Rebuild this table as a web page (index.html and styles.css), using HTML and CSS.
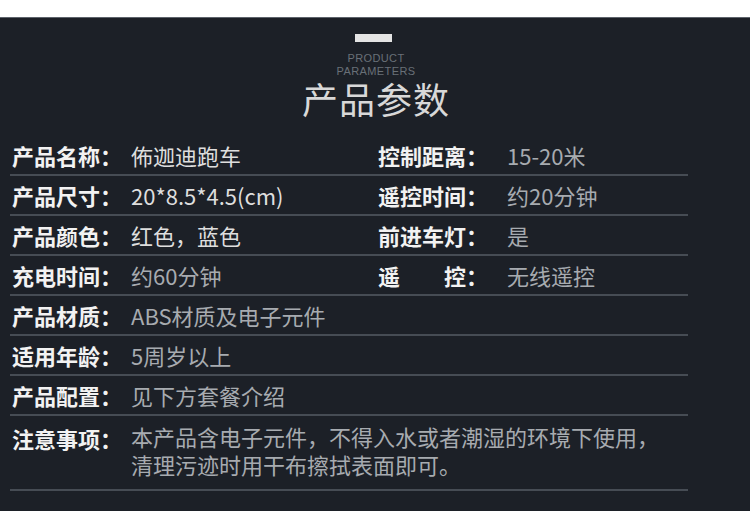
FILE: index.html
```html
<!DOCTYPE html>
<html lang="zh-CN">
<head>
<meta charset="utf-8">
<link rel="stylesheet" href="styles.css">
</head>
<body>
<section class="panel">
  <header class="head">
    <div class="bar"></div>
    <div class="en">PRODUCT</div>
    <div class="en">PARAMETERS</div>
    <h1 class="title">产品参数</h1>
  </header>
  <div class="table">
    <div class="row">
      <div class="lab">产品名称：</div><div class="val hi">佈迦迪跑车</div>
      <div class="lab">控制距离：</div><div class="val">15-20米</div>
    </div>
    <div class="row">
      <div class="lab">产品尺寸：</div><div class="val hi">20*8.5*4.5(cm)</div>
      <div class="lab">遥控时间：</div><div class="val">约20分钟</div>
    </div>
    <div class="row">
      <div class="lab">产品颜色：</div><div class="val hi">红色，蓝色</div>
      <div class="lab">前进车灯：</div><div class="val">是</div>
    </div>
    <div class="row">
      <div class="lab">充电时间：</div><div class="val">约60分钟</div>
      <div class="lab">遥　　控：</div><div class="val">无线遥控</div>
    </div>
    <div class="row">
      <div class="lab">产品材质：</div><div class="val wide">ABS材质及电子元件</div>
    </div>
    <div class="row">
      <div class="lab">适用年龄：</div><div class="val wide">5周岁以上</div>
    </div>
    <div class="row">
      <div class="lab">产品配置：</div><div class="val wide">见下方套餐介绍</div>
    </div>
    <div class="row tall">
      <div class="lab">注意事项：</div>
      <div class="val wide note">
        <div class="line">本产品含电子元件，不得入水或者潮湿的环境下使用，</div>
        <div class="line">清理污迹时用干布擦拭表面即可。</div>
      </div>
    </div>
  </div>
</section>
</body>
</html>
```

FILE: styles.css
```css
html, body {
  margin: 0;
  padding: 0;
  background: #ffffff;
}
body {
  width: 750px;
  height: 527px;
  overflow: hidden;
  font-family: "Noto Sans CJK SC", "Noto Sans", sans-serif;
}
.panel {
  margin-top: 17px;
  height: 494px;
  box-sizing: border-box;
  border-top: 1px solid #5d636b;
  background: #1c2027;
}
.head {
  display: flex;
  flex-direction: column;
  align-items: center;
  padding-top: 16px;
  padding-left: 2px;
}
.bar {
  width: 37px;
  height: 8px;
  background: #e4e4e4;
  margin-left: -5px;
  margin-bottom: 10px;
}
.en {
  font-family: "Liberation Sans", Arial, sans-serif;
  font-size: 11px;
  line-height: 13px;
  height: 13px;
  letter-spacing: 0.4px;
  color: #697078;
  text-align: center;
}
.title {
  margin: -2px 0 0;
  font-family: "Noto Sans CJK SC", sans-serif;
  font-weight: 400;
  font-size: 36px;
  line-height: 44px;
  color: #d8d8d8;
  letter-spacing: 1px;
}
.table {
  margin-left: 10px;
  width: 678px;
  margin-top: 16px;
}
.row {
  display: grid;
  grid-template-columns: 121px 245px 131px 181px;
  align-items: center;
  height: 40px;
  box-sizing: border-box;
  border-bottom: 2px solid #464c54;
}
.row.tall {
  height: 75px;
  align-items: start;
  padding-top: 6px;
}
.lab {
  padding-left: 2px;
  font-size: 22px;
  font-weight: 700;
  color: #f2f2f2;
  white-space: nowrap;
}
.val {
  font-size: 22px;
  font-weight: 400;
  color: #a7abb0;
  white-space: nowrap;
}
.val.hi {
  color: #dedede;
}
.val.wide {
  grid-column: 2 / 5;
}
.note .line {
  height: 28px;
  line-height: 28px;
}
```
